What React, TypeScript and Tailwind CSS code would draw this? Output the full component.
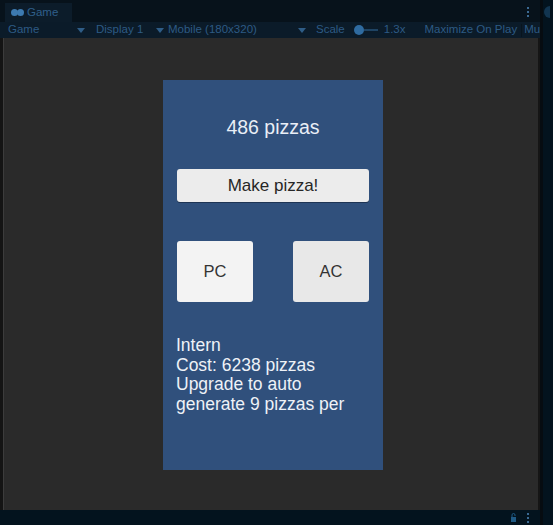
import React from "react"

// Unity-style Game view with a tiny clicker UI rendered inside it
const Caret = () => (
  <svg width="8" height="5" viewBox="0 0 8 5" className="fill-[#2f5d87] shrink-0">
    <path d="M0 0h8L4 5z" />
  </svg>
)

const Kebab = ({ className = "" }: { className?: string }) => (
  <div className={`flex flex-col gap-[2px] ${className}`}>
    <span className="w-[2px] h-[2px] bg-[#3b6a93]" />
    <span className="w-[2px] h-[2px] bg-[#3b6a93]" />
    <span className="w-[2px] h-[2px] bg-[#3b6a93]" />
  </div>
)

const ToolbarItem = ({ label, className }: { label: string; className: string }) => (
  <div className={`shrink-0 flex items-center justify-between ${className}`}>
    <span>{label}</span>
    <Caret />
  </div>
)

const App = () => {
  return (
    <div
      className="w-[553px] h-[525px] flex bg-[#03131e] text-[11.5px] overflow-hidden"
      style={{ fontFamily: '"Liberation Sans", Arial, sans-serif' }}
    >
      <div className="w-[540px] shrink-0 flex flex-col">
        {/* tab strip */}
        <div className="h-[22px] flex items-end bg-[#07121b] pl-[5px] relative">
          <div className="h-[19px] w-[67px] flex items-center gap-[3px] pl-[6px] bg-[#0c1c2a] text-[#2f5f8a]">
            <svg width="13" height="7" viewBox="0 0 13 7" className="fill-[#3d7ab0]">
              <rect x="0" y="0" width="7" height="7" rx="3.5" />
              <rect x="6" y="0" width="7" height="7" rx="3.5" />
            </svg>
            <span>Game</span>
          </div>
          <Kebab className="absolute left-[527px] top-[7px]" />
        </div>
        {/* toolbar */}
        <div className="h-[16px] flex items-center bg-[#0b1b29] text-[#2d5a84] pl-[8px] whitespace-nowrap">
          <ToolbarItem label="Game" className="w-[88px] pr-[11px]" />
          <ToolbarItem label="Display 1" className="w-[72px] pr-[4px]" />
          <ToolbarItem label="Mobile (180x320)" className="w-[148px] pr-[10px]" />
          <span className="shrink-0">Scale</span>
          <div className="shrink-0 flex items-center ml-[9px]">
            <span className="w-[10px] h-[10px] rounded-full bg-[#2f6ba0]" />
            <span className="w-[14px] h-[2px] bg-[#1e4363]" />
          </div>
          <span className="shrink-0 ml-[6px]">1.3x</span>
          <span className="shrink-0 ml-[19px]">Maximize On Play</span>
          <span className="shrink-0 ml-[4px] w-[1px] h-[13px] bg-[#08141e]" />
          <span className="shrink-0 ml-[2px]">Mu</span>
        </div>
        {/* game view */}
        <div className="flex-1 flex bg-[#2a2a2a]">
          <div className="w-[3px] bg-[#141414]" />
          <div className="w-[1px] bg-[#3c3c3c]" />
          <div className="flex-1 pl-[159px] pt-[42px]">
            <div className="w-[220px] h-[390px] bg-[#30507c] flex flex-col px-[14px]">
              <div className="mt-[36px] h-[22px] text-center text-[19.5px] leading-[22px] text-[#e9eef6]">
                486 pizzas
              </div>
              <button className="mt-[31px] h-[33px] w-full rounded-[3px] bg-[#ececec] text-[17px] text-[#262626] shadow-[0_1px_0_#1e3454]">
                Make pizza!
              </button>
              <div className="mt-[39px] flex justify-between">
                <button className="w-[76px] h-[61px] rounded-[3px] bg-[#f3f3f3] text-[16.5px] text-[#333]">
                  PC
                </button>
                <button className="w-[76px] h-[61px] rounded-[3px] bg-[#e8e8e8] text-[16.5px] text-[#333]">
                  AC
                </button>
              </div>
              <div className="mt-[34px] -ml-[1px] text-[17.5px] leading-[19.5px] text-[#eef2f7] whitespace-nowrap">
                <div>Intern</div>
                <div>Cost: 6238 pizzas</div>
                <div>Upgrade to auto</div>
                <div>generate 9 pizzas per</div>
              </div>
            </div>
          </div>
          <div className="w-[2px] bg-[#151515]" />
        </div>
        {/* status strip */}
        <div className="h-[15px] flex items-center bg-[#03131e] pl-[510px] gap-[10px]">
          <svg width="7" height="9" viewBox="0 0 7 9" className="fill-[#1f5a85] shrink-0">
            <path d="M1 4h5v5H1z" />
            <path d="M2 4V2a1.5 1.5 0 0 1 3 0v1" fill="none" stroke="#1f5a85" strokeWidth="1" />
          </svg>
          <Kebab />
        </div>
      </div>
      {/* neighbouring dock panel */}
      <div className="w-[3px] shrink-0 bg-[#060c11]" />
      <div className="flex-1 bg-[#03131e] pt-[6px] pl-[1px]">
        <div className="w-[6px] h-[12px] rounded-l-full bg-[#123550]" />
      </div>
    </div>
  )
}

export default App
